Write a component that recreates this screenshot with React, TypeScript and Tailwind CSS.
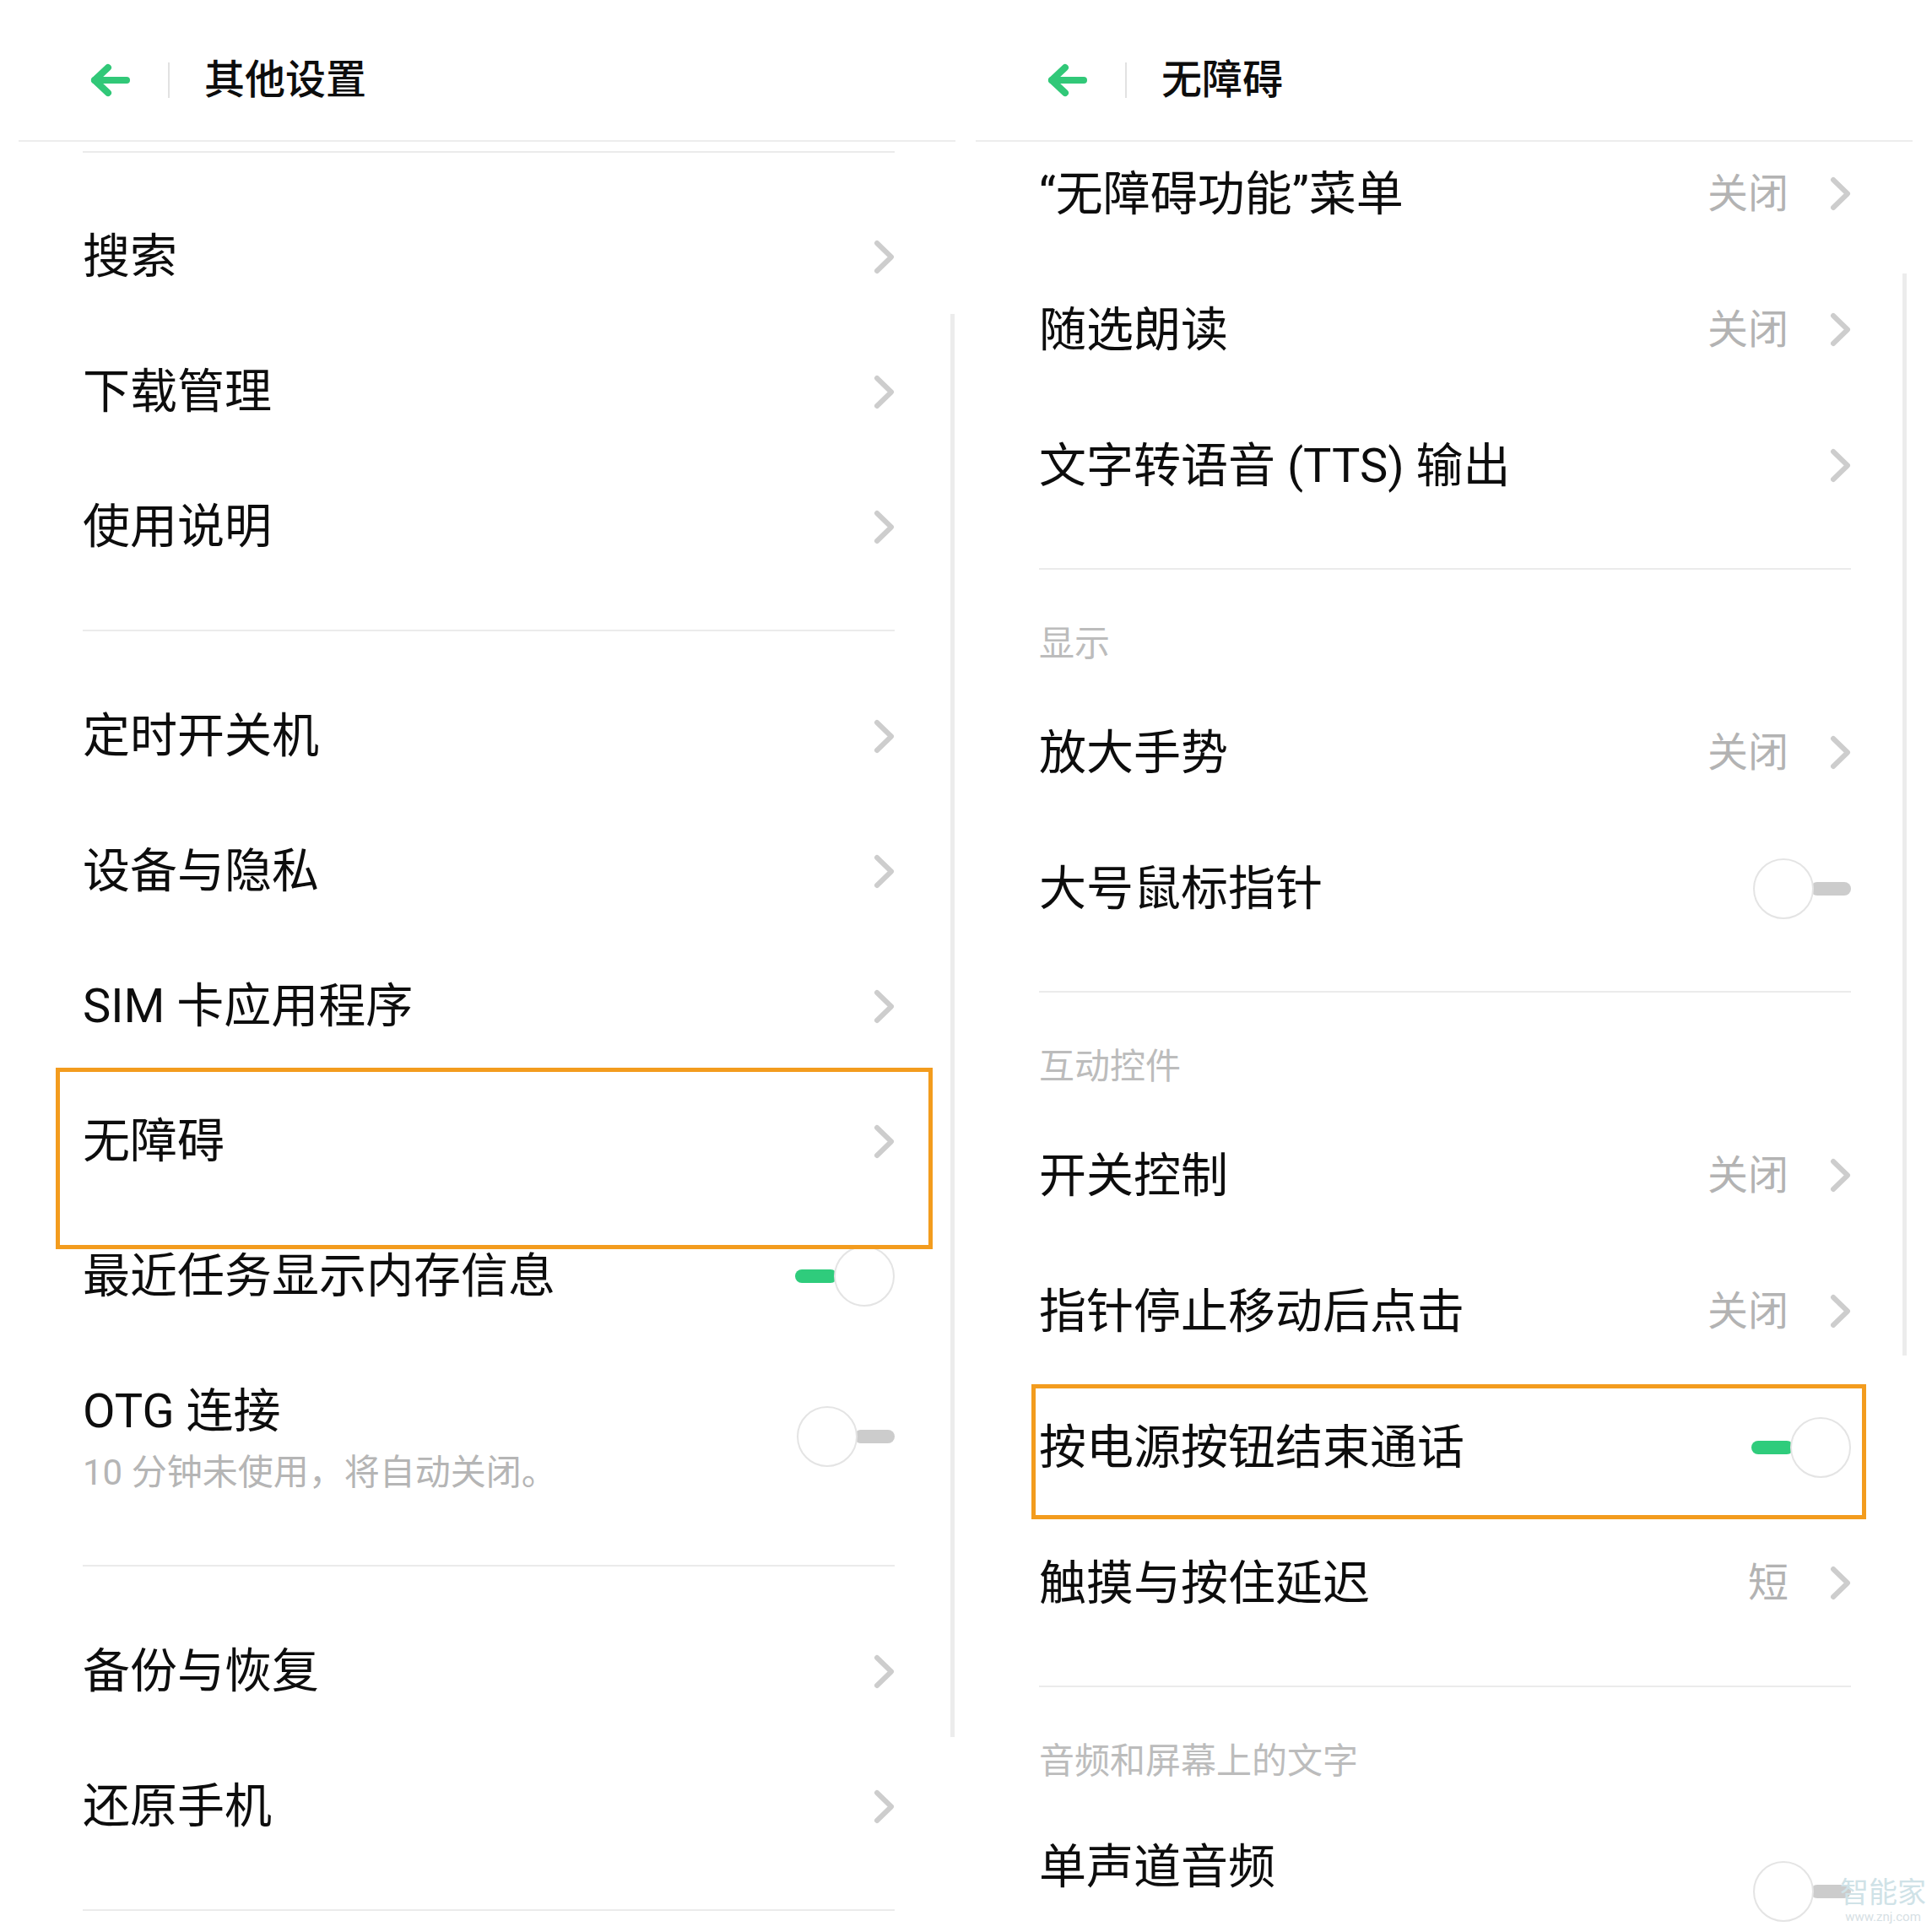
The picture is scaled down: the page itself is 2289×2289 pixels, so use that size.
import type { ReactNode } from "react";

type Trail = "chevron" | "on" | "off";

function BackArrow() {
  return (
    <svg width="48" height="40" viewBox="0 0 48 40" fill="none" stroke="#31c878" strokeWidth="8" strokeLinecap="round" strokeLinejoin="round">
      <path d="M44 20H6" />
      <path d="M22 5L6 20l16 15" />
    </svg>
  );
}

function Chevron() {
  return (
    <svg width="25" height="41" viewBox="0 0 25 41" fill="none" stroke="#cdcdcd" strokeWidth="6" strokeLinecap="round" strokeLinejoin="round">
      <path d="M4 4l17 16.5L4 37" />
    </svg>
  );
}

function Toggle({ on }: { on: boolean }) {
  if (on) {
    return (
      <div className="flex items-center">
        <div className="h-[16px] w-[50px] rounded-full bg-[#2fcc7c]" />
        <div className="relative -ml-[4px] h-[72px] w-[72px] rounded-full border-2 border-[#e4e4e4] bg-white" />
      </div>
    );
  }
  return (
    <div className="flex items-center">
      <div className="relative z-10 h-[72px] w-[72px] rounded-full border-2 border-[#e4e4e4] bg-white" />
      <div className="-ml-[4px] h-[16px] w-[48px] rounded-full bg-[#cccccc]" />
    </div>
  );
}

function TrailPart({ trail, value }: { trail: Trail; value?: string }) {
  if (trail === "chevron") {
    return (
      <div className="flex items-center">
        {value && <span className="mr-[49px] text-[48px] leading-none text-[#b3b3b3]">{value}</span>}
        <Chevron />
      </div>
    );
  }
  return <Toggle on={trail === "on"} />;
}

function Row({ label, value, trail = "chevron" }: { label: string; value?: string; trail?: Trail }) {
  return (
    <div className="flex h-[160px] items-center justify-between">
      <span className="text-[56px] leading-[64px] text-[#0d0d0d]">{label}</span>
      <TrailPart trail={trail} value={value} />
    </div>
  );
}

function RowR({ label, value, trail = "chevron" }: { label: string; value?: string; trail?: Trail }) {
  return (
    <div className="flex h-[161px] items-center justify-between">
      <span className="text-[56px] leading-[64px] text-[#0d0d0d]">{label}</span>
      <TrailPart trail={trail} value={value} />
    </div>
  );
}

function Divider() {
  return <div className="h-[2px] bg-[#ebebeb]" />;
}

function SectionTitle({ children }: { children: ReactNode }) {
  return (
    <div className="pb-[28px] pt-[68px] text-[42px] leading-[40px] text-[#bcbcbc]">{children}</div>
  );
}

function Header({ title }: { title: string }) {
  return (
    <div className="flex h-[168px] shrink-0 items-center border-b-2 border-[#ededed] pl-[84px] pt-[24px]">
      <BackArrow />
      <div className="ml-[45px] h-[42px] w-[2px] bg-[#e2e2e2]" />
      <h1 className="ml-[41px] text-[48px] font-medium leading-none text-[#0d0d0d]">{title}</h1>
    </div>
  );
}

function OtherSettings() {
  return (
    <section className="relative flex h-full w-[1110px] flex-col">
      <Header title="其他设置" />
      <div className="pl-[76px] pr-[72px] pt-[11px]">
        <Divider />
        <div className="pb-[42px] pt-[43px]">
          <Row label="搜索" />
          <Row label="下载管理" />
          <Row label="使用说明" />
        </div>
        <Divider />
        <div className="pb-[42px] pt-[44px]">
          <Row label="定时开关机" />
          <Row label="设备与隐私" />
          <Row label="SIM 卡应用程序" />
          <Row label="无障碍" />
          <Row label="最近任务显示内存信息" trail="on" />
          <div className="flex h-[220px] items-start justify-between">
            <div className="flex flex-col pt-[48px]">
              <span className="text-[56px] leading-[64px] text-[#0d0d0d]">OTG 连接</span>
              <span className="mt-[16px] text-[42px] leading-[50px] text-[#b5b5b5]">10 分钟未使用，将自动关闭。</span>
            </div>
            <div className="self-center">
              <Toggle on={false} />
            </div>
          </div>
        </div>
        <Divider />
        <div className="pb-[42px] pt-[44px]">
          <Row label="备份与恢复" />
          <Row label="还原手机" />
        </div>
        <Divider />
      </div>

      <div className="absolute left-[1104px] top-[372px] h-[1686px] w-[5px] bg-[#ececec]" />
      <div className="absolute left-[44px] top-[1265px] h-[215px] w-[1039px] border-[5px] border-[#f39c1e]" />
    </section>
  );
}

function Accessibility() {
  return (
    <section className="relative flex h-full w-[1110px] flex-col">
      <Header title="无障碍" />
      <div className="flex-1 overflow-hidden pl-[75px] pr-[73px]">
        <div className="-mt-[19px]">
          <div className="pb-[41px]">
            <RowR label="“无障碍功能”菜单" value="关闭" />
            <RowR label="随选朗读" value="关闭" />
            <RowR label="文字转语音 (TTS) 输出" />
          </div>
          <Divider />
          <SectionTitle>显示</SectionTitle>
          <div className="pb-[41px]">
            <RowR label="放大手势" value="关闭" />
            <RowR label="大号鼠标指针" trail="off" />
          </div>
          <Divider />
          <SectionTitle>互动控件</SectionTitle>
          <div className="pb-[41px]">
            <RowR label="开关控制" value="关闭" />
            <RowR label="指针停止移动后点击" value="关闭" />
            <RowR label="按电源按钮结束通话" trail="on" />
            <RowR label="触摸与按住延迟" value="短" />
          </div>
          <Divider />
          <SectionTitle>音频和屏幕上的文字</SectionTitle>
          <div className="flex h-[212px] items-start justify-between">
            <span className="pt-[45px] text-[56px] leading-[64px] text-[#0d0d0d]">单声道音频</span>
            <div className="self-center">
              <Toggle on={false} />
            </div>
          </div>
        </div>
      </div>

      <div className="absolute left-[1098px] top-[324px] h-[1282px] w-[5px] bg-[#ececec]" />
      <div className="absolute left-[66px] top-[1640px] h-[160px] w-[989px] border-[5px] border-[#f39c1e]" />
    </section>
  );
}

export default function App() {
  return (
    <div className="relative flex h-[2289px] w-[2289px] gap-[24px] overflow-hidden bg-white px-[22px] font-[Roboto,'Noto_Sans_CJK_SC',sans-serif]">
      <OtherSettings />
      <Accessibility />

      <div className="absolute left-[2180px] top-[2222px] flex flex-col items-center">
        <span className="text-[34px] leading-[40px] text-[#cfe2e7]">智能家</span>
        <span className="text-[15px] leading-[18px] text-[#d6e0e4]">www.znj.com</span>
      </div>
    </div>
  );
}
